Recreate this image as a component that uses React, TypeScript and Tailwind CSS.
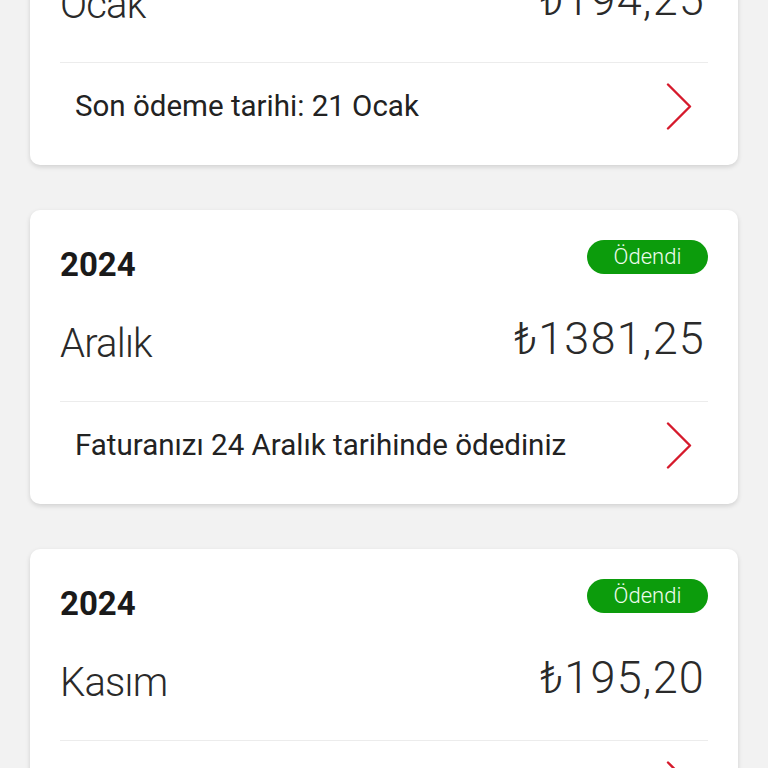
import React from "react";

type Bill = {
  year: string;
  month: string;
  amount: string;
  note: string;
  paid: boolean;
};

const bills: Bill[] = [
  { year: "2025", month: "Ocak", amount: "₺194,25", note: "Son ödeme tarihi: 21 Ocak", paid: false },
  { year: "2024", month: "Aralık", amount: "₺1381,25", note: "Faturanızı 24 Aralık tarihinde ödediniz", paid: true },
  { year: "2024", month: "Kasım", amount: "₺195,20", note: "Faturanızı 22 Kasım tarihinde ödediniz", paid: true },
];

const Chevron = () => (
  <svg width="26" height="47" viewBox="0 0 26 47" fill="none" className="shrink-0">
    <path d="M2 1.5L24 23.5L2 45.5" stroke="#d61a2c" strokeWidth="2.4" strokeLinecap="round" strokeLinejoin="round" />
  </svg>
);

const BillCard = ({ bill }: { bill: Bill }) => (
  <div className="bg-white rounded-[10px] shadow-[0_2px_5px_rgba(0,0,0,0.14)] px-[30px] pt-[30px] pb-[16px]">
    <div className="flex justify-between items-start h-[45px]">
      <span className="mt-[5px] text-[33px] leading-[40px] font-bold text-[#1a1a1a]">{bill.year}</span>
      {bill.paid && (
        <span className="w-[121px] h-[34px] rounded-full bg-[#0c9c0c] text-[#eefcee] text-[22px] leading-[34px] text-center font-light">
          Ödendi
        </span>
      )}
    </div>
    <div className="mt-[33px] flex justify-between items-start h-[52px]">
      <span className="text-[40px] leading-[52px] font-light tracking-[-0.8px] text-[#2a2a2a]">{bill.month}</span>
      <span className="-mt-[5px] mr-[3px] text-[45px] leading-[52px] font-light tracking-[1.2px] text-[#2a2a2a]">{bill.amount}</span>
    </div>
    <div className="mt-[31px] h-px bg-[#ececec]" />
    <div className="h-[86px] flex items-center justify-between pl-[15px] pr-[16px]">
      <span className="text-[29.5px] text-[#222]">{bill.note}</span>
      <Chevron />
    </div>
  </div>
);

export default function App() {
  return (
    <div
      className="h-[768px] overflow-hidden bg-[#f2f2f2]"
      style={{ fontFamily: "Roboto, 'Noto Sans', 'DejaVu Sans', sans-serif" }}
    >
      <div className="-mt-[129px] flex flex-col gap-[45px] px-[30px]">
        {bills.map((b, i) => (
          <BillCard key={i} bill={b} />
        ))}
      </div>
    </div>
  );
}
